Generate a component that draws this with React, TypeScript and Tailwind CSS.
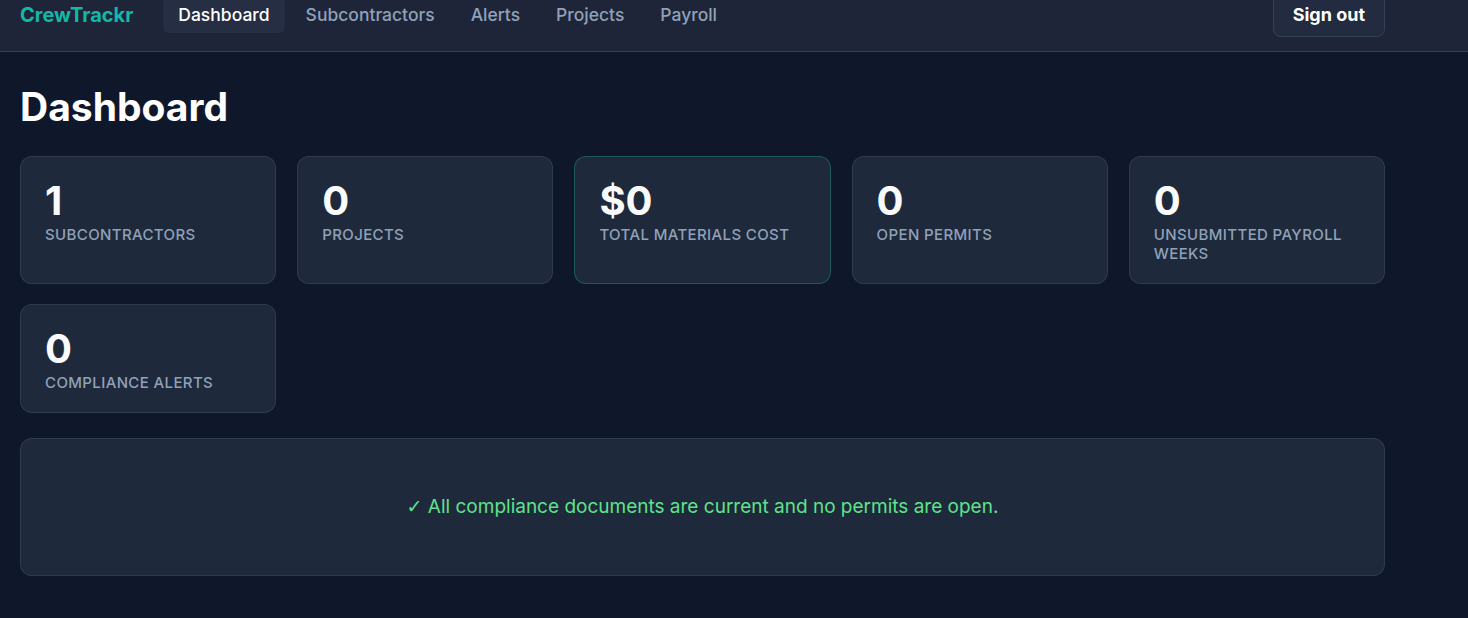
import React from "react";

const stats = [
  { value: "1", label: "Subcontractors", accent: false },
  { value: "0", label: "Projects", accent: false },
  { value: "$0", label: "Total Materials Cost", accent: true },
  { value: "0", label: "Open Permits", accent: false },
  { value: "0", label: "Unsubmitted Payroll Weeks", accent: false },
  { value: "0", label: "Compliance Alerts", accent: false },
];

const nav = ["Dashboard", "Subcontractors", "Alerts", "Projects", "Payroll"];

export default function App() {
  return (
    <div
      className="min-h-[calc(100vh+22px)] bg-[#0f172a] text-slate-100 -mt-[22px] pb-10"
      style={{ fontFamily: "Inter, 'Noto Sans', sans-serif" }}
    >
      <header className="h-[74px] bg-[#1e2538] border-b border-[#34405a]">
        <div className="h-full max-w-[1405px] px-5 flex items-center justify-between">
          <div className="flex items-center">
            <span className="text-xl font-bold text-[#14b8a6]">CrewTrackr</span>
            <nav className="ml-[30px] flex items-center gap-[6px]">
              {nav.map((n, i) => (
                <a
                  key={n}
                  className={
                    i === 0
                      ? "px-[15px] py-1 rounded-md text-[17.5px] leading-7 font-medium text-white bg-[#252e42]"
                      : "px-[15px] py-1 rounded-md text-[17.5px] leading-7 font-medium text-slate-400"
                  }
                >
                  {n}
                </a>
              ))}
            </nav>
          </div>
          <button className="px-[19px] py-2 rounded-lg border border-[#334155] bg-[#222b3f] text-lg leading-[26px] font-bold text-white">
            Sign out
          </button>
        </div>
      </header>

      <main className="max-w-[1405px] px-5 pt-[35px]">
        <h1 className="text-[39px] leading-none font-bold text-white mb-[30px]">Dashboard</h1>
        <div className="grid grid-cols-5 gap-x-[21px] gap-y-[20px]">
          {stats.map((s) => (
            <div
              key={s.label}
              className={
                s.accent
                  ? "rounded-xl bg-[#1e293b] border border-[#14b8a6]/35 px-6 py-5"
                  : "rounded-xl bg-[#1e293b] border border-[#334155]/80 px-6 py-5"
              }
            >
              <div className="text-[40px] leading-[1.2] font-bold text-[#f8fafc]">{s.value}</div>
              <div className="text-[15px] leading-[19px] font-medium uppercase tracking-wide text-slate-400">
                {s.label}
              </div>
            </div>
          ))}
        </div>
        <div className="mt-[25px] rounded-xl bg-[#1e293b] border border-[#334155]/80 pt-[54px] pb-[55px] text-center text-[19px] leading-[27px] text-[#5fe38a]">
          <span style={{ fontFamily: "'DejaVu Sans', sans-serif" }}>✓</span> All compliance documents are current and no
          permits are open.
        </div>
      </main>
    </div>
  );
}
